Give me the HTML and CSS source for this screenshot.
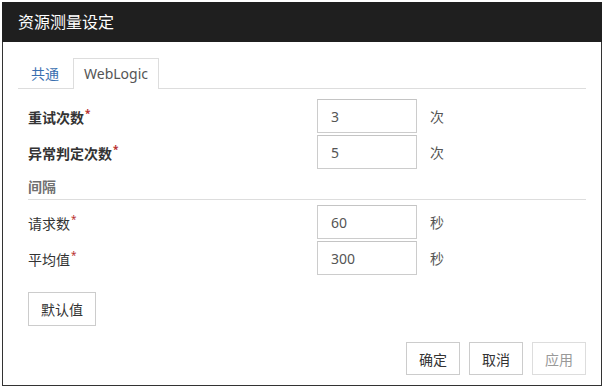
FILE: index.html
```html
<!DOCTYPE html>
<html lang="zh-CN">
<head>
  <meta charset="UTF-8">
  <title>资源测量设定</title>
  <link rel="stylesheet" href="styles.css">
</head>
<body>
  <div class="dialog">
    <div class="dialog-header">资源测量设定</div>

    <div class="dialog-body">
      <ul class="tabs">
        <li class="tab">共通</li>
        <li class="tab active">WebLogic</li>
      </ul>

      <div class="tab-content">
        <div class="form-row">
          <label class="bold">重试次数<span class="req">*</span></label>
          <input type="text" value="3">
          <span class="unit">次</span>
        </div>
        <div class="form-row">
          <label class="bold">异常判定次数<span class="req">*</span></label>
          <input type="text" value="5">
          <span class="unit">次</span>
        </div>

        <div class="section-title">间隔</div>

        <div class="form-row">
          <label>请求数<span class="req">*</span></label>
          <input type="text" value="60">
          <span class="unit">秒</span>
        </div>
        <div class="form-row">
          <label>平均值<span class="req">*</span></label>
          <input type="text" value="300">
          <span class="unit">秒</span>
        </div>

        <button class="btn btn-default-value">默认值</button>
      </div>

      <div class="dialog-footer">
        <button class="btn">确定</button>
        <button class="btn">取消</button>
        <button class="btn" disabled>应用</button>
      </div>
    </div>
  </div>
</body>
</html>
```

FILE: styles.css
```css
body {
  margin: 0;
  background: #ffffff;
  font-family: "Noto Sans", "Noto Sans CJK SC", sans-serif;
  font-size: 14px;
  color: #333;
}

.dialog {
  margin: 2px 0 0 2px;
  width: 598px;
  height: 383px;
  border: 1px solid #333;
  border-top: none;
  background: white;
}

.dialog-header {
  height: 40px;
  line-height: 40px;
  margin: 0 -1px;
  padding-left: 16px;
  background: #1f1f1f;
  color: #ffffff;
  font-size: 16px;
}

.dialog-body {
  padding: 16px 15px 0 15px;
}

.tabs {
  display: flex;
  list-style: none;
  margin: 0;
  padding: 0;
  border-bottom: 1px solid #ddd;
}

.tab {
  height: 29px;
  line-height: 29px;
  padding: 0 12px;
  margin-right: 1px;
  color: #3a6fb0;
  border: 1px solid transparent;
  border-bottom: none;
}

.tab.active {
  color: #555;
  border-color: #ddd;
  background: white;
  margin-bottom: -1px;
  height: 30px;
  padding: 0 10px;
}

.tab-content {
  padding: 10px 0 0 10px;
}

.form-row {
  display: flex;
  align-items: center;
  height: 34px;
  margin-bottom: 2px;
}

.form-row label {
  width: 289px;
}

.form-row label.bold {
  font-weight: bold;
}

.req {
  color: #b8312f;
  font-size: 10px;
  vertical-align: 6px;
  margin-left: 1px;
}

.form-row input {
  box-sizing: border-box;
  width: 100px;
  height: 34px;
  padding: 0 13px;
  border: 1px solid #ccc;
  border-top-color: #c4c4c4;
  font-family: "Noto Sans", "Noto Sans CJK SC", sans-serif;
  font-size: 14px;
  color: #555;
  outline: none;
}

.unit {
  margin-left: 13px;
  color: #555;
}

.section-title {
  margin-top: 8px;
  line-height: 20px;
  padding-bottom: 2px;
  border-bottom: 1px solid #ddd;
  font-weight: bold;
  color: #6f6f6f;
  margin-bottom: 5px;
}

.btn {
  box-sizing: border-box;
  height: 34px;
  padding: 0 12px;
  background: white;
  border: 1px solid #ccc;
  font-family: "Noto Sans", "Noto Sans CJK SC", sans-serif;
  font-size: 14px;
  color: #333;
}

.btn:disabled {
  color: #999;
  border-color: #ddd;
}

.btn-default-value {
  margin-top: 15px;
  width: 68px;
}

.dialog-footer {
  display: flex;
  justify-content: flex-end;
  gap: 9px;
  margin-top: 16px;
}

.dialog-footer .btn {
  width: 54px;
  height: 33px;
  padding: 0;
}
```
